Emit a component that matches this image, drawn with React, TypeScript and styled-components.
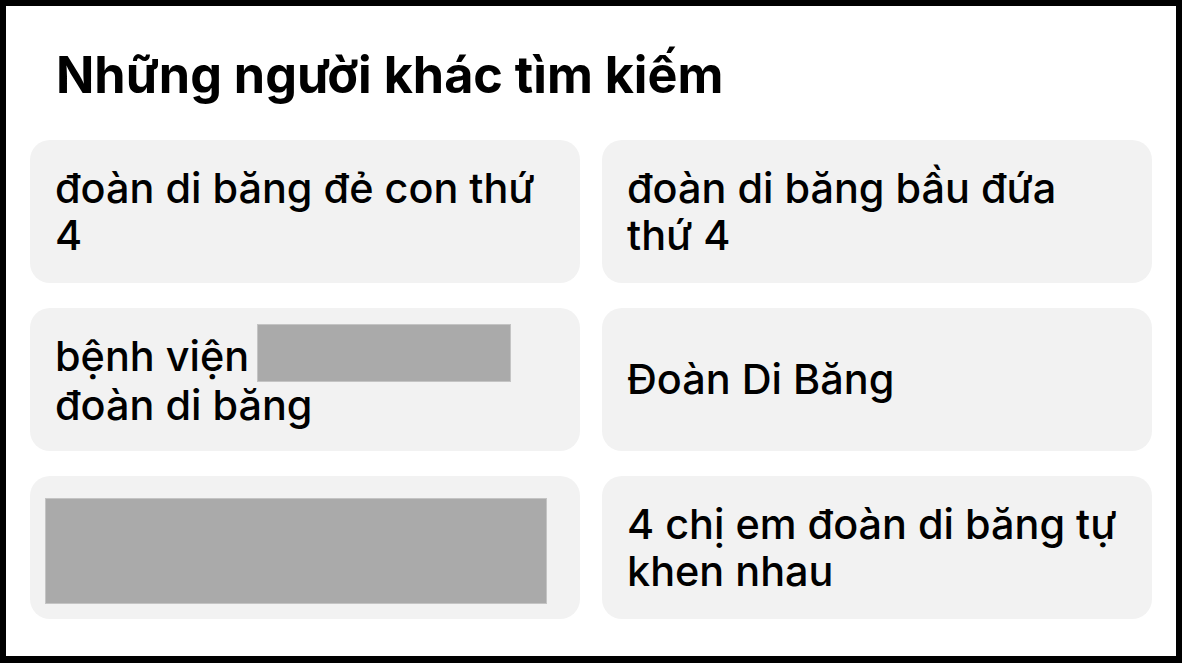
import React from "react";
import styled, { createGlobalStyle } from "styled-components";

const Global = createGlobalStyle`
  html, body { margin: 0; padding: 0; background: #000; }
  body { font-family: Inter, "Noto Sans", "Liberation Sans", sans-serif; }
`;

const Frame = styled.div`
  width: 1182px;
  height: 663px;
  box-sizing: border-box;
  background: #000;
  padding: 6px 6px 7px 6px;
`;

const Panel = styled.section`
  height: 100%;
  background: #fff;
  box-sizing: border-box;
  padding: 40px 24px 0 24px;
  display: flex;
  flex-direction: column;
`;

const Title = styled.h1`
  margin: 0 0 0 26px;
  font-size: 50.3px;
  line-height: 58px;
  font-weight: 700;
  color: #000;
`;

const Grid = styled.div`
  margin-top: 36px;
  display: grid;
  grid-template-columns: 550px 550px;
  grid-auto-rows: 143px;
  column-gap: 22px;
  row-gap: 25px;
`;

const Card = styled.div<{ $pad?: string }>`
  background: #f2f2f2;
  border-radius: 20px;
  display: flex;
  align-items: center;
  padding: ${(p) => p.$pad ?? "0 25px"};
  box-sizing: border-box;
  font-size: 41.4px;
  line-height: 47px;
  font-weight: 500;
  color: #000;
`;

const Text = styled.div``;

const Redact = styled.span<{ $w: number; $h: number }>`
  display: inline-block;
  width: ${(p) => p.$w}px;
  height: ${(p) => p.$h}px;
  margin-left: -3px;
  background: #aaaaaa;
  border: 1px solid #c4c4c4;
  box-sizing: border-box;
  vertical-align: -11px;
`;

const Block = styled.div`
  width: 502px;
  height: 106px;
  background: #aaaaaa;
  border: 1px solid #c4c4c4;
  box-sizing: border-box;
`;

export default function App() {
  return (
    <>
      <Global />
      <Frame>
        <Panel>
          <Title>Những người khác tìm kiếm</Title>
          <Grid>
            <Card>
              <Text>đoàn di băng đẻ con thứ 4</Text>
            </Card>
            <Card>
              <Text>đoàn di băng bầu đứa thứ 4</Text>
            </Card>
            <Card $pad="0 25px 6px">
              <Text>
                bệnh viện <Redact $w={254} $h={58} /> đoàn di băng
              </Text>
            </Card>
            <Card>
              <Text>Đoàn Di Băng</Text>
            </Card>
            <Card $pad="6px 15px 0">
              <Block />
            </Card>
            <Card>
              <Text>4 chị em đoàn di băng tự khen nhau</Text>
            </Card>
          </Grid>
        </Panel>
      </Frame>
    </>
  );
}
